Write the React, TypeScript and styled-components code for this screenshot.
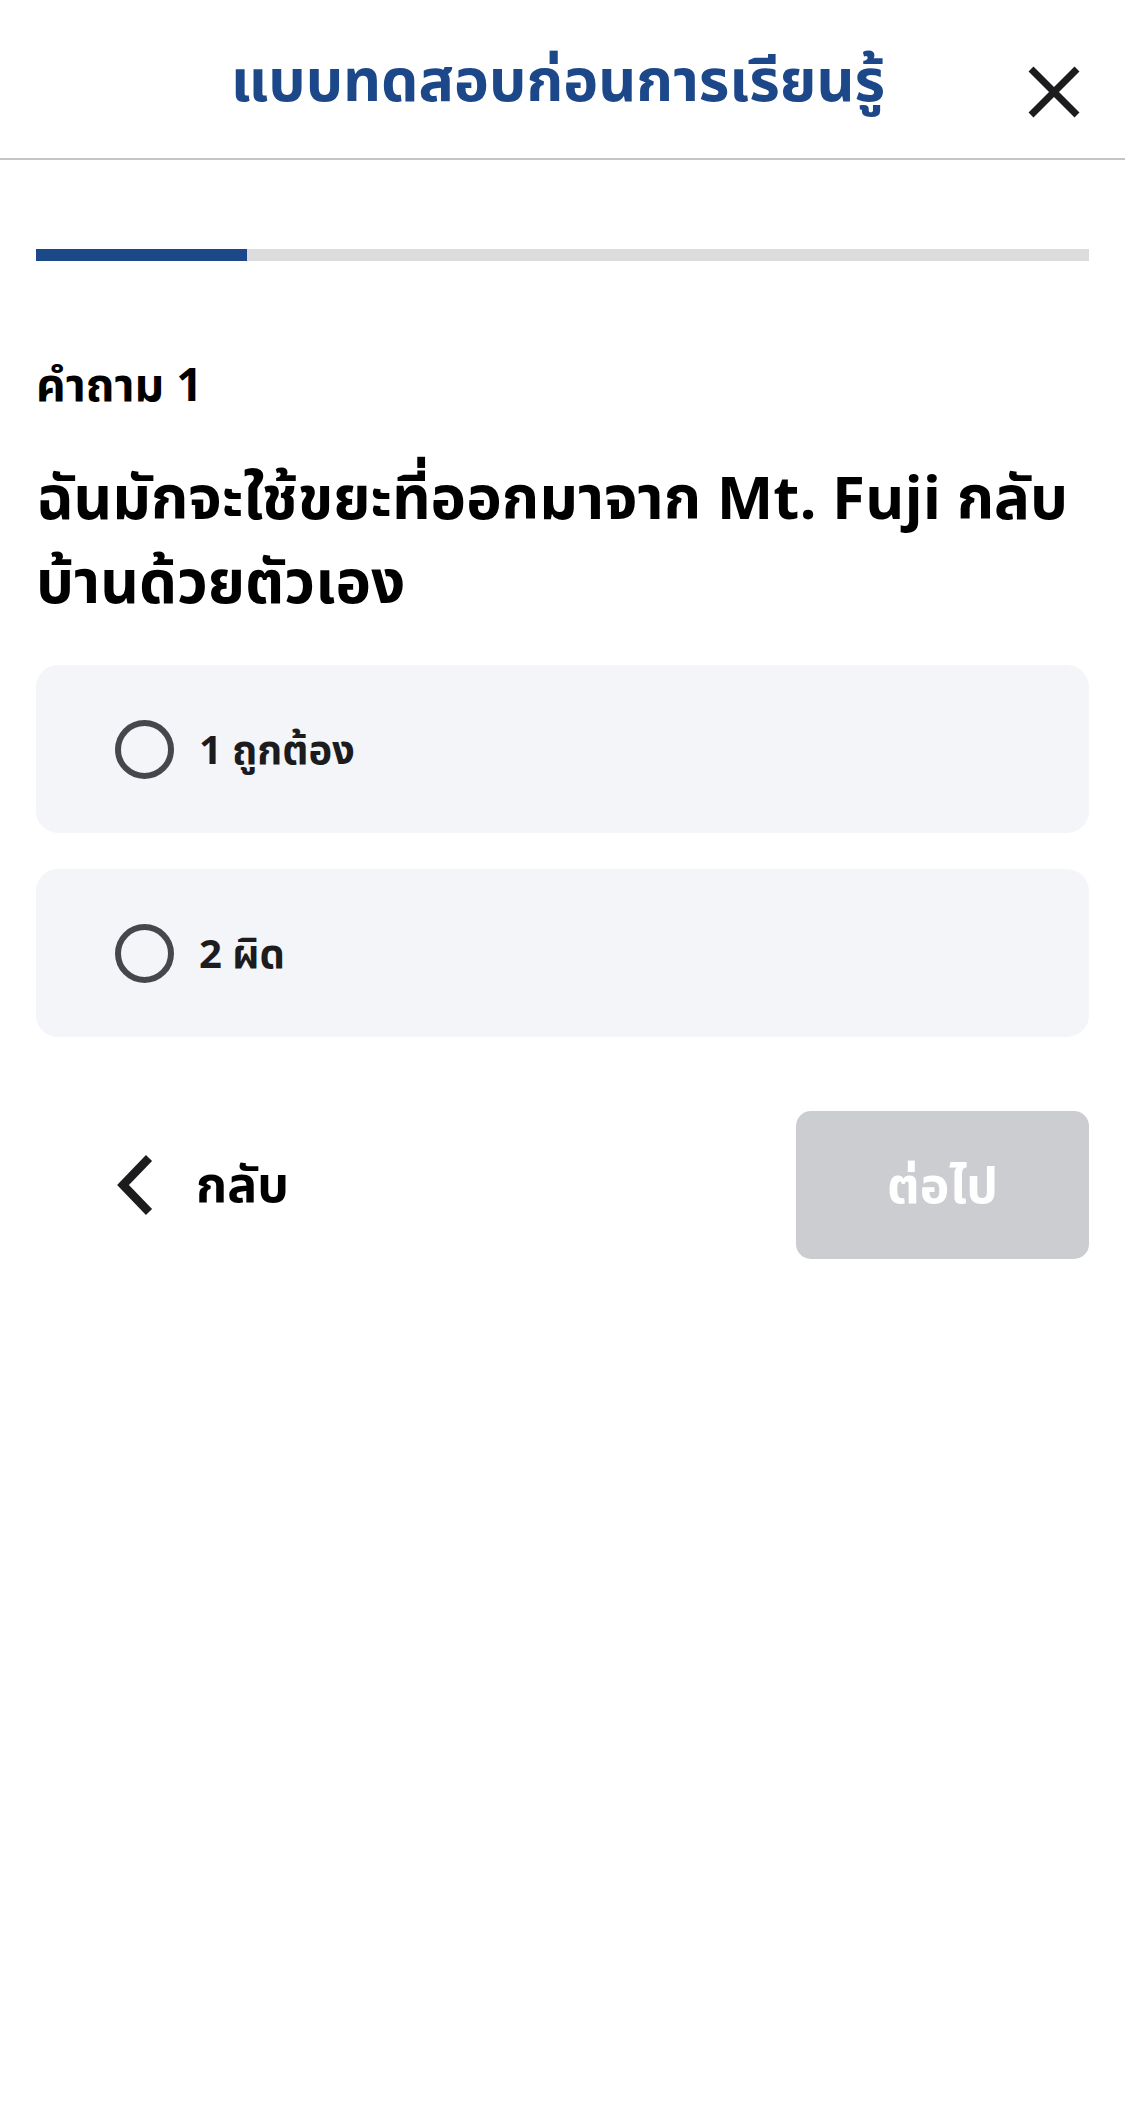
import React from "react";
import styled, { createGlobalStyle } from "styled-components";

const GlobalStyle = createGlobalStyle`
  html, body {
    margin: 0;
    padding: 0;
    background: #ffffff;
  }
  body {
    font-family: "Noto Sans Thai", "Noto Sans", "Liberation Sans", sans-serif;
    -webkit-font-smoothing: antialiased;
  }
  * { box-sizing: border-box; }
`;

const Page = styled.div`
  width: 1125px;
  min-height: 2128px;
  background: #fff;
`;

const Header = styled.header`
  height: 160px;
  display: grid;
  grid-template-columns: 1fr auto 1fr;
  align-items: center;
  border-bottom: 2px solid #c4c4c6;
  padding: 0 45px 0 36px;
`;

const Title = styled.h1`
  grid-column: 2;
  margin: 0;
  font-size: 59px;
  font-weight: 700;
  color: #1c4788;
  line-height: 1;
  padding-top: 8px;
`;

const CloseButton = styled.button`
  grid-column: 3;
  justify-self: end;
  width: 52px;
  height: 52px;
  padding: 0;
  border: none;
  background: transparent;
  display: flex;
  align-items: center;
  justify-content: center;
  margin-top: 26px;
`;

const Main = styled.main`
  padding: 0 36px;
`;

const ProgressTrack = styled.div`
  margin-top: 89px;
  height: 12px;
  background: #dcdcdc;
`;

const ProgressFill = styled.div`
  height: 100%;
  background: #1c4788;
`;

const Label = styled.div`
  margin-top: 96px;
  font-size: 46px;
  font-weight: 700;
  color: #000;
  line-height: 60px;
`;

const Question = styled.h2`
  margin: 42px 0 0;
  font-size: 60px;
  font-weight: 700;
  color: #000;
  line-height: 84px;
`;

const Options = styled.div`
  margin-top: 38px;
  display: flex;
  flex-direction: column;
  gap: 36px;
`;

const OptionCard = styled.label`
  height: 168px;
  background: #f4f5f9;
  border-radius: 22px;
  display: flex;
  align-items: center;
  gap: 25px;
  padding-left: 79px;
  cursor: pointer;
`;

const Radio = styled.span`
  width: 59px;
  height: 59px;
  border-radius: 50%;
  border: 6px solid #47464c;
  flex: none;
`;

const OptionText = styled.span`
  font-size: 40px;
  font-weight: 700;
  color: #1c1c1e;
  line-height: 1;
  padding-top: 6px;
`;

const Footer = styled.div`
  margin-top: 74px;
  display: flex;
  align-items: center;
  justify-content: space-between;
`;

const BackButton = styled.button`
  display: flex;
  align-items: center;
  gap: 42px;
  padding: 0 0 0 80px;
  border: none;
  background: transparent;
  font-family: inherit;
  font-size: 50px;
  font-weight: 700;
  color: #000;
  line-height: 1;
`;

const BackText = styled.span`
  padding-top: 4px;
`;

const NextButton = styled.button`
  width: 293px;
  height: 148px;
  border: none;
  border-radius: 15px;
  background: #cccdd1;
  color: #fff;
  font-family: inherit;
  font-size: 50px;
  font-weight: 700;
  padding-top: 6px;
`;

const options = ["1 ถูกต้อง", "2 ผิด"];

export default function App() {
  const progress = 20;
  return (
    <Page>
      <GlobalStyle />
      <Header>
        <Title>แบบทดสอบก่อนการเรียนรู้</Title>
        <CloseButton aria-label="close">
          <svg width="52" height="52" viewBox="0 0 52 52">
            <path d="M3 3 L49 49 M49 3 L3 49" stroke="#1c1c1e" strokeWidth="7" fill="none" />
          </svg>
        </CloseButton>
      </Header>
      <Main>
        <ProgressTrack>
          <ProgressFill style={{ width: `${progress}%` }} />
        </ProgressTrack>
        <Label>คำถาม 1</Label>
        <Question>ฉันมักจะใช้ขยะที่ออกมาจาก Mt. Fuji กลับบ้านด้วยตัวเอง</Question>
        <Options>
          {options.map((o) => (
            <OptionCard key={o}>
              <Radio />
              <OptionText>{o}</OptionText>
            </OptionCard>
          ))}
        </Options>
        <Footer>
          <BackButton>
            <svg width="38" height="60" viewBox="0 0 38 60">
              <path d="M33 3 L7 30 L33 57" stroke="#1c1c1e" strokeWidth="8.5" fill="none" />
            </svg>
            <BackText>กลับ</BackText>
          </BackButton>
          <NextButton disabled>ต่อไป</NextButton>
        </Footer>
      </Main>
    </Page>
  );
}
